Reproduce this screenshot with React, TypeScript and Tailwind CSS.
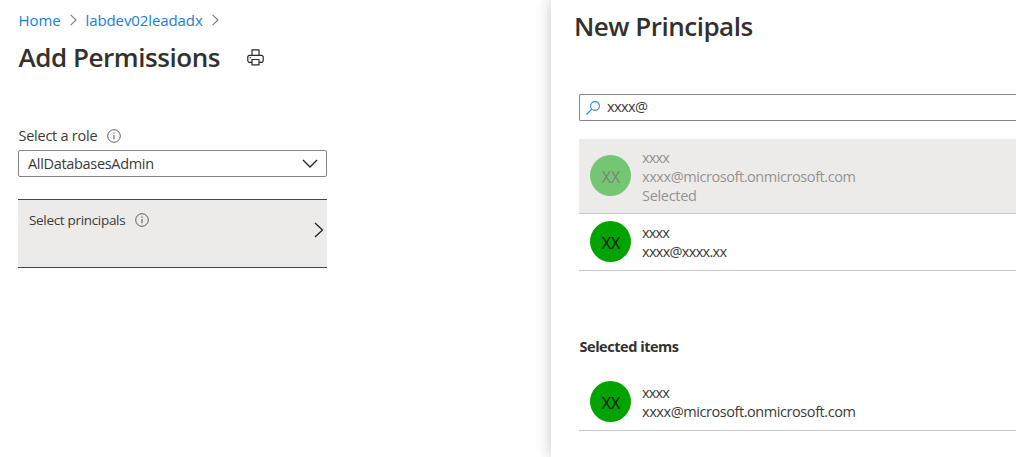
import type { ReactNode } from "react";

function InfoIcon() {
  return (
    <svg className="h-[14px] w-[14px] text-[#555]" viewBox="0 0 14 14" fill="none" stroke="currentColor">
      <circle cx="7" cy="7" r="6.3" strokeWidth="0.95" />
      <path d="M7 6v4.3" strokeWidth="1.05" />
      <path d="M7 3.6v1.2" strokeWidth="1.1" />
    </svg>
  );
}

function Crumb({ children }: { children: ReactNode }) {
  return (
    <li className="flex items-center">
      <a className="text-[#1a80d4]">{children}</a>
      <svg className="mr-[9px] ml-[9px] h-[12px] w-[7px] text-[#777]" viewBox="0 0 7 12" fill="none" stroke="currentColor">
        <path d="M.6 .8 6 6 .6 11.2" strokeWidth="1.05" />
      </svg>
    </li>
  );
}

function PrintIcon() {
  return (
    <svg className="h-[17px] w-[17px] text-[#2b2b2b]" viewBox="0 0 17 17" fill="none" stroke="currentColor" strokeWidth="1.2">
      <path d="M5 6.4V.8h7v5.6" />
      <path d="M5 13.3H2L.8 12.1V7.6L2 6.4h13l1.2 1.2v4.5L15 13.3h-3" />
      <path d="M5 10.5h7v5.4H5z" />
      <path d="M2.6 8.6h1.2" />
    </svg>
  );
}

function Person({ name, detail, status }: { name: string; detail: string; status?: string }) {
  return (
    <li
      className={
        status
          ? "flex h-[75px] items-center border-b border-[#c8c8c8] bg-[#edebe9] pl-[11px]"
          : "flex h-[57px] items-center border-b border-[#c8c8c8] pl-[11px]"
      }
    >
      <div className={status ? "-mt-px flex items-center opacity-50" : "-mt-px flex items-center"}>
        <div className="flex h-[41px] w-[41px] items-center justify-center rounded-full bg-[#00a300] pt-[2px] pl-px text-[16px] text-[#111]">
          XX
        </div>
        <div className="ml-[11px] pt-px text-[14.5px] leading-[19px] text-[#3b3a39]">
          <div className="tracking-[-0.8px]">{name}</div>
          <div className={detail.length > 20 ? "tracking-[-0.43px]" : "tracking-[-0.7px]"}>{detail}</div>
          {status && <div className="tracking-[-0.3px]">{status}</div>}
        </div>
      </div>
    </li>
  );
}

export default function App() {
  return (
    <div className="flex h-[457px] w-[1016px] overflow-hidden bg-white font-['Open_Sans','Noto_Sans',sans-serif] text-[14.5px] text-[#3b3a39]">
      <main className="w-[551px] shrink-0 pt-[10px] pl-[18px]">
        <ol className="flex h-[20px] items-center pl-[0.5px] text-[15px] leading-[20px] tracking-[-0.1px]">
          <Crumb>Home</Crumb>
          <Crumb>labdev02leadadx</Crumb>
        </ol>
        <div className="mt-[9px] flex h-[36px] items-center">
          <h1 className="w-[229px] pl-[0.5px] text-[26px] leading-[36px] font-semibold tracking-[-0.45px] whitespace-nowrap text-[#323130]">
            Add Permissions
          </h1>
          <PrintIcon />
        </div>
        <div className="mt-[51px] flex h-[20px] items-center">
          <span className="-mt-px w-[89px] pl-[0.5px] tracking-[-0.25px] whitespace-nowrap">Select a role</span>
          <InfoIcon />
        </div>
        <div className="mt-[4px] flex h-[27px] w-[309px] items-center justify-between rounded-[2px] border border-[#858483] pr-[8px] pl-[9px]">
          <span className="tracking-[-0.32px]">AllDatabasesAdmin</span>
          <svg className="h-[9px] w-[16px] text-[#222]" viewBox="0 0 16 9" fill="none" stroke="currentColor">
            <path d="m1 1 7 7 7-7" strokeWidth="1.3" />
          </svg>
        </div>
        <div className="mt-[22px] flex h-[69px] w-[309px] justify-between border-y border-[#484644] bg-[#edebe9] pr-[3px] pl-[11px]">
          <div className="mt-[10px] flex h-[20px] items-center">
            <span className="w-[106px] text-[13.5px] tracking-[-0.32px] whitespace-nowrap">Select principals</span>
            <InfoIcon />
          </div>
          <svg className="mt-[22px] h-[16px] w-[10px] text-[#222]" viewBox="0 0 10 16" fill="none" stroke="currentColor">
            <path d="m1 1 7.5 7L1 15" strokeWidth="1.3" />
          </svg>
        </div>
      </main>
      <aside className="w-[465px] shrink-0 bg-white pt-[8px] shadow-[0_0_14px_rgba(0,0,0,0.24)]">
        <h2 className="pl-[23px] text-[26px] leading-[36px] font-semibold tracking-[-0.5px] text-[#323130]">New Principals</h2>
        <div className="pl-[28px]">
          <div className="mt-[50px] flex h-[27px] items-center rounded-l-[2px] border border-r-0 border-[#858483] pl-[6px]">
            <svg className="h-[14px] w-[14px] text-[#2b88d8]" viewBox="0 0 14 14" fill="none" stroke="currentColor">
              <circle cx="9" cy="5" r="4.4" strokeWidth="1.1" />
              <path d="M5.8 8.2.5 13.5" strokeWidth="1.2" />
            </svg>
            <span className="-mt-px ml-[7px] tracking-[-0.6px]">xxxx@</span>
          </div>
          <ul className="mt-[18px]">
            <Person name="xxxx" detail="xxxx@microsoft.onmicrosoft.com" status="Selected" />
            <Person name="xxxx" detail="xxxx@xxxx.xx" />
          </ul>
          <h3 className="mt-[66px] pl-[0.5px] text-[14.5px] leading-[20px] font-bold tracking-[-0.46px] text-[#323130]">Selected items</h3>
          <ul className="mt-[17px]">
            <Person name="xxxx" detail="xxxx@microsoft.onmicrosoft.com" />
          </ul>
        </div>
      </aside>
    </div>
  );
}
